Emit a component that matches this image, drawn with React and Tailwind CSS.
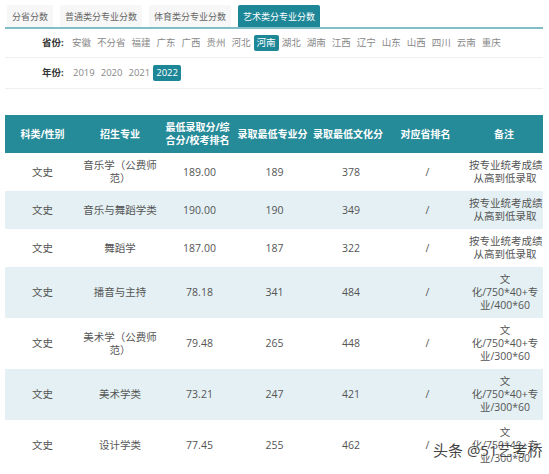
const tabs = ['分省分数', '普通类分专业分数', '体育类分专业分数', '艺术类分专业分数']
const provinces = ['安徽', '不分省', '福建', '广东', '广西', '贵州', '河北', '河南', '湖北', '湖南', '江西', '辽宁', '山东', '山西', '四川', '云南', '重庆']
const years = ['2019', '2020', '2021', '2022']

const headers = [
  ['科类/性别'],
  ['招生专业'],
  ['最低录取分/综', '合分/校考排名'],
  ['录取最低专业分'],
  ['录取最低文化分'],
  ['对应省排名'],
  ['备注'],
]

const rows = [
  { major: ['音乐学（公费师', '范）'], min: '189.00', pro: '189', cul: '378', note: ['按专业统考成绩', '从高到低录取'] },
  { major: ['音乐与舞蹈学类'], min: '190.00', pro: '190', cul: '349', note: ['按专业统考成绩', '从高到低录取'] },
  { major: ['舞蹈学'], min: '187.00', pro: '187', cul: '322', note: ['按专业统考成绩', '从高到低录取'] },
  { major: ['播音与主持'], min: '78.18', pro: '341', cul: '484', note: ['文', '化/750*40+专', '业/400*60'] },
  { major: ['美术学（公费师', '范）'], min: '79.48', pro: '265', cul: '448', note: ['文', '化/750*40+专', '业/300*60'] },
  { major: ['美术学类'], min: '73.21', pro: '247', cul: '421', note: ['文', '化/750*40+专', '业/300*60'] },
  { major: ['设计学类'], min: '77.45', pro: '255', cul: '462', note: ['文', '化/750*40+专', '业/300*60'] },
]

const widths = ['w-[75px]', 'w-[80px]', 'w-[75px]', 'w-[75px]', 'w-[76px]', 'w-[79px]', 'w-[78px]']

function Lines({ lines }) {
  return lines.map((l, i) => (
    <span key={i} className="block whitespace-nowrap">{l}</span>
  ))
}

export default function App() {
  return (
    <div className="relative w-[549px] h-[474px] overflow-hidden bg-white text-[#555]" style={{ fontFamily: '"Open Sans", "Noto Sans CJK SC", sans-serif' }}>
      {/* tabs */}
      <div className="mx-[5px] mt-[5px] flex gap-[7px] pl-[2px] border-b-2 border-[#82bcc5] w-[538px]">
        {tabs.map((t, i) => (
          <div
            key={t}
            className={
              'h-[22px] px-[5px] flex items-center text-[9px] leading-none rounded-t-[2px] ' +
              (i === 3 ? 'bg-[#1d8797] text-white' : 'bg-[#f7f7f7] text-[#666]')
            }
          >
            {t}
          </div>
        ))}
      </div>

      {/* provinces */}
      <div className="mx-[5px] w-[538px] h-[29px] flex items-center border-b border-[#efefef] text-[9.5px] leading-none">
        <span className="ml-[37px] w-[27px] font-bold text-[#333]">省份:</span>
        {provinces.map((p) => (
          <span
            key={p}
            className={'px-[3px] py-[3px] rounded-[2px] ' + (p === '河南' ? 'bg-[#1d8797] text-white' : 'text-[#888]')}
          >
            {p}
          </span>
        ))}
      </div>

      {/* years */}
      <div className="mx-[5px] w-[538px] h-[31px] flex items-center border-b border-[#efefef] text-[9.5px] leading-none">
        <span className="ml-[37px] w-[28px] font-bold text-[#333]">年份:</span>
        {years.map((y) => (
          <span
            key={y}
            className={'px-[3px] py-[3px] rounded-[2px] ' + (y === '2022' ? 'bg-[#1d8797] text-white' : 'text-[#888]')}
          >
            {y}
          </span>
        ))}
      </div>

      {/* table */}
      <table className="mt-[26px] ml-[5px] w-[538px] table-fixed border-collapse text-[10.5px] leading-[13px] text-center">
        <colgroup>
          {widths.map((w, i) => <col key={i} className={w} />)}
        </colgroup>
        <thead>
          <tr className="bg-[#268b99] text-white">
            {headers.map((h, i) => (
              <th key={i} className="h-[38px] py-[6px] px-[1px] text-[10px] font-bold">
                <Lines lines={h} />
              </th>
            ))}
          </tr>
        </thead>
        <tbody>
          {rows.map((r, i) => (
            <tr key={i} className={i % 2 === 1 ? 'bg-[#e4f0f3]' : 'bg-white'}>
              <td className="py-[6px] px-[2px] h-[38px]">文史</td>
              <td className="py-[6px] px-[2px]"><Lines lines={r.major} /></td>
              <td className="py-[6px] px-[2px] pl-[6px]">{r.min}</td>
              <td className="py-[6px] px-[2px] pl-[6px]">{r.pro}</td>
              <td className="py-[6px] px-[2px] pl-[8px]">{r.cul}</td>
              <td className="py-[6px] px-[2px] pl-[6px]">/</td>
              <td className="py-[6px] px-[2px] pl-[4px]"><Lines lines={r.note} /></td>
            </tr>
          ))}
        </tbody>
      </table>

      {/* watermark */}
      <div
        className="absolute left-[433px] top-[443px] text-[15px] leading-none text-[#444] whitespace-nowrap"
        style={{ textShadow: '0 0 2px #fff, 0 0 2px #fff' }}
      >
        头条 @51艺考桥
      </div>
    </div>
  )
}
